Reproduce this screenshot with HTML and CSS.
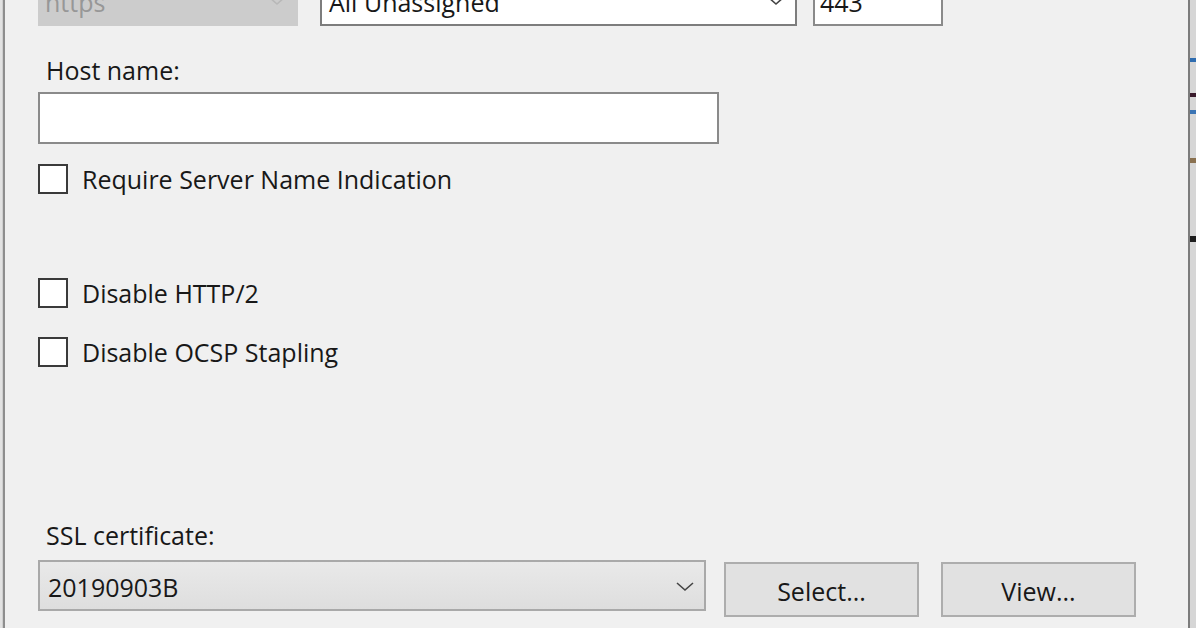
FILE: index.html
```html
<!DOCTYPE html>
<html lang="en">
<head>
<meta charset="utf-8">
<title>Add Site Binding</title>
<link rel="stylesheet" href="styles.css">
</head>
<body>
<div class="screen">
  <div class="edge-left"></div>
  <div class="dialog">
    <div class="top-row">
      <div class="combo combo-disabled combo-type">
        <span class="combo-text">https</span>
        <svg class="chev" width="18" height="10" viewBox="0 0 18 10"><path d="M1 1 L9 8 L17 1" fill="none" stroke="#b8b8b8" stroke-width="1.6"/></svg>
      </div>
      <div class="combo combo-white combo-ip">
        <span class="combo-text">All Unassigned</span>
        <svg class="chev" width="18" height="10" viewBox="0 0 18 10"><path d="M1 1 L9 8 L17 1" fill="none" stroke="#444" stroke-width="1.6"/></svg>
      </div>
      <div class="field field-port"><span class="combo-text">443</span></div>
    </div>

    <div class="label label-host">Host name:</div>
    <div class="field field-host"></div>

    <div class="check check-sni"><span class="box"></span><span>Require Server Name Indication</span></div>
    <div class="check check-http2"><span class="box"></span><span>Disable HTTP/2</span></div>
    <div class="check check-ocsp"><span class="box"></span><span>Disable OCSP Stapling</span></div>

    <div class="label label-ssl">SSL certificate:</div>
    <div class="cert-row">
      <div class="combo combo-cert">
        <span class="combo-text">20190903B</span>
        <svg class="chev" width="18" height="10" viewBox="0 0 18 10"><path d="M1 1 L9 8 L17 1" fill="none" stroke="#444" stroke-width="1.6"/></svg>
      </div>
      <div class="btn btn-select">Select...</div>
      <div class="btn btn-view">View...</div>
    </div>
  </div>
  <div class="edge-right"></div>
</div>
</body>
</html>
```

FILE: styles.css
```css
html, body {
  margin: 0;
  padding: 0;
  height: 100%;
  overflow: hidden;
}

body {
  background: #f0f0f0;
  font-family: "Open Sans", "Noto Sans", sans-serif;
  font-size: 25px;
  color: #181818;
}

.screen {
  display: flex;
  width: 1196px;
  height: 628px;
}

.edge-left {
  width: 3px;
  background: #e2e2e2;
  border-right: 2px solid #8e8e8e;
  box-shadow: inset -1px 0 0 #cfcfcf;
}

.dialog {
  flex: 1;
  display: flex;
  flex-direction: column;
  align-items: flex-start;
  padding-left: 33px;
  background: #f0f0f0;
}

.edge-right {
  width: 6px;
  border-left: 2px solid #7c7c7c;
  background:
    linear-gradient(to bottom,
      #d6d6d6 0, #d6d6d6 58px,
      #2f6db0 58px, #2f6db0 62px,
      #d6d6d6 62px, #d6d6d6 93px,
      #3a1b2c 93px, #3a1b2c 97px,
      #d6d6d6 97px, #d6d6d6 110px,
      #3b74b4 110px, #3b74b4 114px,
      #d6d6d6 114px, #d6d6d6 158px,
      #8a7150 158px, #8a7150 163px,
      #d6d6d6 163px, #d6d6d6 236px,
      #1e1e1e 236px, #1e1e1e 242px,
      #d6d6d6 242px, #d6d6d6 100%);
}

/* top row (cut off at the top edge) */
.top-row {
  display: flex;
  margin-top: -26px;
  height: 52px;
}

.combo,
.field {
  box-sizing: border-box;
  display: flex;
  align-items: center;
  position: relative;
  height: 52px;
}

.combo-text {
  padding-left: 7px;
  padding-top: 3px;
  white-space: nowrap;
}

.chev {
  position: absolute;
  right: 12px;
  top: 50%;
  margin-top: -4px;
}

.combo-type {
  width: 260px;
  background: #cccccc;
  color: #979797;
}

.combo-ip {
  width: 477px;
  margin-left: 22px;
  background: #ffffff;
  border: 2px solid #7d7d7d;
}

.combo-ip .chev {
  right: 10px;
}

.field-port {
  width: 130px;
  margin-left: 16px;
  background: #ffffff;
  border: 2px solid #8a8a8a;
}

.field-port .combo-text {
  padding-left: 5px;
}

/* labels */
.label {
  line-height: 32px;
  padding-left: 8px;
}

.label-host {
  margin-top: 28px;
}

.field-host {
  width: 681px;
  margin-top: 6px;
  background: #ffffff;
  border: 2px solid #8a8a8a;
}

/* checkboxes */
.check {
  display: flex;
  align-items: center;
  height: 32px;
  line-height: 32px;
}

.box {
  box-sizing: border-box;
  width: 30px;
  height: 30px;
  border: 2px solid #3a3a3a;
  background: #ffffff;
  margin-right: 14px;
}

.check-sni {
  margin-top: 19px;
}

.check-http2 {
  margin-top: 82px;
}

.check-ocsp {
  margin-top: 27px;
}

.label-ssl {
  margin-top: 151px;
}

/* certificate row */
.cert-row {
  display: flex;
  align-items: flex-start;
  margin-top: 9px;
}

.combo-cert {
  width: 668px;
  height: 51px;
  background: linear-gradient(to bottom, #e9e9e9, #dedede);
  border: 2px solid #a9a9a9;
}

.combo-cert .combo-text {
  padding-top: 2px;
  padding-left: 8px;
}

.combo-cert .chev {
  right: 10px;
}

.btn {
  box-sizing: border-box;
  width: 195px;
  height: 55px;
  margin-top: 2px;
  display: flex;
  align-items: center;
  justify-content: center;
  padding-top: 3px;
  background: #e1e1e1;
  border: 2px solid #adadad;
}

.btn-select {
  margin-left: 18px;
}

.btn-view {
  margin-left: 22px;
}
```
